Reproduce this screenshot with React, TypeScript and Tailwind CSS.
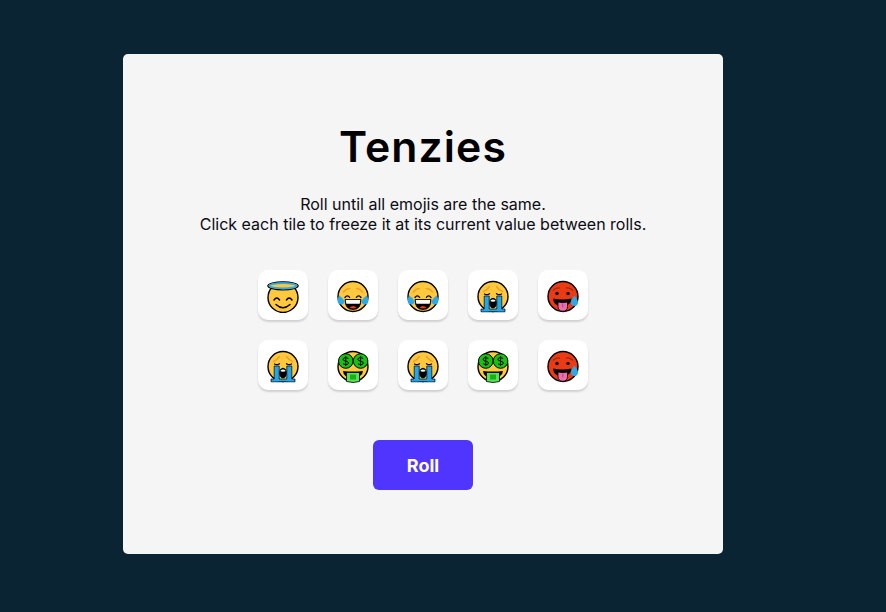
import React from "react";

const ink = "#000";
const yellow = "#FFC83D";
const blue = "#2BA9E8";

function Angel() {
  return (
    <svg width="36" height="36" viewBox="0 0 36 36" fill="none">
      <circle cx="18" cy="20.500" r="15" fill={yellow} stroke={ink} strokeWidth="1.4" />
      <ellipse cx="18" cy="8.800" rx="15.200" ry="4" fill={yellow} stroke={ink} strokeWidth="1.2" />
      <ellipse cx="18" cy="8.800" rx="13.200" ry="2.700" fill={yellow} stroke={blue} strokeWidth="1.800" />
      <path d="M9 23q2.800-4 5.600 0M21.400 23q2.800-4 5.600 0" stroke={ink} strokeWidth="1.400" strokeLinecap="round" />
      <path d="M11 27.500q7 6.500 14 0" stroke={ink} strokeWidth="1.400" strokeLinecap="round" />
    </svg>
  );
}

function Joy() {
  return (
    <svg width="36" height="36" viewBox="0 0 36 36" fill="none">
      <circle cx="18" cy="19.500" r="15" fill={yellow} stroke={ink} strokeWidth="1.4" />
      <path d="M8.500 15q2.500-3.500 6-3.500M21.500 11.500q3.500 0 6 3.500" stroke="#F0A02C" strokeWidth="1.500" strokeLinecap="round" />
      <path d="M10 20.500q2.300-3 4.600-.2M21.400 20.300q2.300-2.800 4.600.2" stroke={ink} strokeWidth="1.300" strokeLinecap="round" />
      <path d="M10 22.500h16q0 10-8 10t-8-10z" fill={ink} stroke={ink} strokeWidth=".8" strokeLinejoin="round" />
      <path d="M10.800 23h14.400l-.5 3.800H11.300z" fill="#fff" />
      <path d="M14.500 30.500q3.500-3 7 0q-3.500 2-7 0z" fill="#EA3A14" />
      <path d="M4.200 18.500q3.600 2.300 5 5.300.4 3.200-2.300 3.700-3.200.4-4.100-2.500-.6-3.300 1.400-6.500z" fill={blue} />
      <path d="M31.800 18.500q-3.600 2.300-5 5.300-.4 3.200 2.300 3.700 3.200.4 4.100-2.500.6-3.300-1.400-6.500z" fill={blue} />
    </svg>
  );
}

function Sob() {
  return (
    <svg width="36" height="36" viewBox="0 0 36 36" fill="none">
      <circle cx="18" cy="19.500" r="15" fill={yellow} stroke={ink} strokeWidth="1.4" />
      <path d="M8.500 14.500q3.500-1 6-5M27.500 14.500q-3.500-1-6-5" stroke="#F0A02C" strokeWidth="1.500" strokeLinecap="round" />
      <path d="M9.500 17q2.500 1.500 5-.3M21.500 16.700q2.500 1.800 5 .3" stroke={ink} strokeWidth="1.300" strokeLinecap="round" />
      <path d="M6 34.800V32h3.200V19h5v13h7.600V19h5v13H30v2.800z" fill="#1FA8F0" stroke={ink} strokeWidth=".7" strokeLinejoin="round" />
      <ellipse cx="18" cy="26" rx="3.800" ry="5.300" fill={ink} />
      <path d="M15.200 24q2.800-2.800 5.600 0q-2.800 1.400-5.600 0z" fill="#fff" />
    </svg>
  );
}

function Hot() {
  return (
    <svg width="36" height="36" viewBox="0 0 36 36" fill="none">
      <circle cx="18" cy="19.500" r="15" fill="#EA3B14" stroke={ink} strokeWidth="1.4" />
      <path d="M8.500 13q3-2.500 6-2M27.500 13q-3-2.500-6-2" stroke="#A8260C" strokeWidth="1.400" strokeLinecap="round" />
      <circle cx="12" cy="16.500" r="1.700" fill={ink} />
      <circle cx="23" cy="16.500" r="1.700" fill={ink} />
      <path d="M8 21.500q9.500 1.800 18.500 0-.5 7.500-9.200 7.700T8 21.500z" fill={ink} />
      <path d="M13 25q4.500 1.200 9.500 0v4.500q0 4.700-4.700 4.700T13 29.500z" fill="#EC6FAD" stroke={ink} strokeWidth=".8" />
      <path d="M17.800 26.500v4" stroke="#A83B78" strokeWidth=".9" />
      <path d="M29.500 18.500q3.500 4.300 3.500 7.300-.6 3.200-3.600 3.200-3.200-.2-3.500-3.200 0-3 3.600-7.300z" fill={blue} />
    </svg>
  );
}

function Money() {
  return (
    <svg width="36" height="36" viewBox="0 0 36 36" fill="none">
      <circle cx="18" cy="19.500" r="15" fill={yellow} stroke={ink} strokeWidth="1.4" />
      <circle cx="10.800" cy="14" r="7.300" fill="#17C20E" stroke={ink} strokeWidth="1" />
      <circle cx="25.600" cy="14" r="7.300" fill="#17C20E" stroke={ink} strokeWidth="1" />
      <path d="M13.300 11.500q-2.500-1.500-4.500-.5-1.500 1 0 2.500l4 1.300q1.500 1.200 0 2.500-2 1-4.500-.5M10.800 9v10" stroke={ink} strokeWidth="1" />
      <path d="M28.100 11.500q-2.500-1.500-4.500-.5-1.500 1 0 2.500l4 1.300q1.500 1.200 0 2.500-2 1-4.500-.5M25.600 9v10" stroke={ink} strokeWidth="1" />
      <path d="M8 24q10 1.200 20 0-.5 6-10 6.500T8 24z" fill={ink} />
      <path d="M11.500 25.500h13v9q-6.500 2-13 0z" fill="#5BE05E" stroke={ink} strokeWidth=".8" />
      <rect x="15" y="27.500" width="6" height="5" fill="#17B20E" />
    </svg>
  );
}

const tiles = [Angel, Joy, Joy, Sob, Hot, Sob, Money, Sob, Money, Hot];

export default function App() {
  return (
    <div className="flex min-h-[612px] justify-center bg-[#0B2434] pt-[54px] pr-[40px] font-['Inter',sans-serif]">
      <main className="flex h-[500px] w-[600px] flex-col items-center rounded-[5px] bg-[#F5F5F5] pt-[68px]">
        <h1 className="text-[42.700px] leading-[50px] font-semibold tracking-[1.100px] text-black">Tenzies</h1>
        <p className="mt-[22px] text-center text-[16px] leading-[20px] text-[#0B0B14]">
          Roll until all emojis are the same.
          <br />
          Click each tile to freeze it at its current value between rolls.
        </p>
        <div className="mt-[36px] grid grid-cols-5 gap-5">
          {tiles.map((Face, i) => (
            <div
              key={i}
              className="flex h-[50px] w-[50px] items-center justify-center rounded-[10px] bg-white shadow-[0_2px_2px_rgba(0,0,0,0.15)]"
            >
              <Face />
            </div>
          ))}
        </div>
        <button className="mt-[50px] h-[50px] w-[100px] rounded-[6px] bg-[#5035FF] text-[18px] font-bold text-white">
          Roll
        </button>
      </main>
    </div>
  );
}
